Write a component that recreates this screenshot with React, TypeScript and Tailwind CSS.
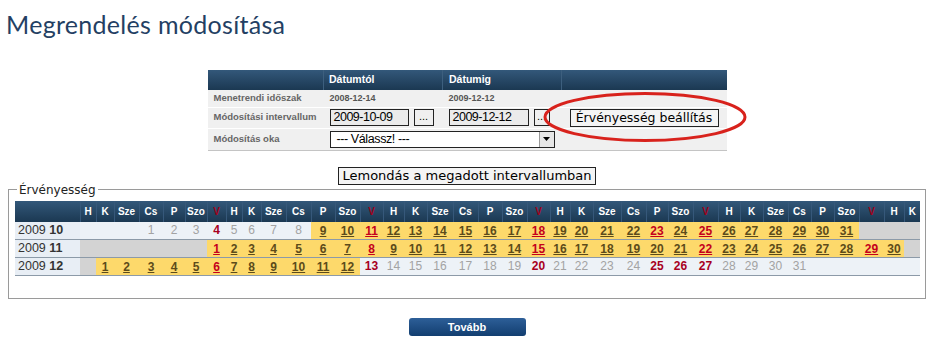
import React from 'react'

const widths = [16, 18, 25, 24, 22, 22, 19, 16, 19, 25, 25, 24, 25, 23, 21, 23, 26, 25, 24, 25, 23, 20, 23, 28, 25, 22, 25, 25, 22, 23, 25, 23, 23, 25, 25, 20, 16]
const dayNames = ['H', 'K', 'Sze', 'Cs', 'P', 'Szo', 'V']

interface MonthRow {
  m: string
  offset: number
  days: number
  from: number
  to: number
  red: number[]
  grayBefore: boolean
  grayAfter: boolean
}

const months: MonthRow[] = [
  { m: '10', offset: 3, days: 31, from: 9, to: 31, red: [4, 11, 18, 23, 25], grayBefore: false, grayAfter: true },
  { m: '11', offset: 6, days: 30, from: 1, to: 30, red: [1, 8, 15, 22, 29], grayBefore: true, grayAfter: true },
  { m: '12', offset: 1, days: 31, from: 1, to: 12, red: [6, 13, 20, 25, 26, 27], grayBefore: true, grayAfter: false },
]

const sans = "font-['Liberation_Sans',Arial,sans-serif]"
const verdana = "font-['DejaVu_Sans',Verdana,sans-serif]"
const cell = 'p-0 h-[17px] leading-[16px] border-b border-[#8c9aa8]'

function MonthCells({ row }: { row: MonthRow }) {
  const cells = []
  for (let i = 0; i < 37; i++) {
    const d = i - row.offset + 1
    if (d < 1 || d > row.days) {
      const gray = d < 1 ? row.grayBefore : row.grayAfter
      cells.push(<td key={i} className={`${cell} ${gray ? 'bg-[#d3d3d3]' : 'bg-[#edf2f7]'}`} />)
      continue
    }
    const isRed = row.red.includes(d)
    if (d >= row.from && d <= row.to) {
      cells.push(
        <td key={i} className={`${cell} bg-[#fdd96b] text-center`}>
          <span className={`underline font-bold text-[12px] ${isRed ? 'text-[#c4001c]' : 'text-[#5c4b1a]'}`}>{d}</span>
        </td>
      )
    } else {
      cells.push(
        <td key={i} className={`${cell} bg-[#edf2f7] text-center text-[12px] ${isRed ? 'font-bold text-[#a8001e]' : 'text-[#a3a3a3]'}`}>
          {d}
        </td>
      )
    }
  }
  return <>{cells}</>
}

export default function App() {
  return (
    <div className="w-[934px] h-[341px] bg-white overflow-hidden flex flex-col">
      <h1 className="pl-[6px] pt-[9px] text-[25px] leading-[30px] text-[#243f63] font-['Lato',sans-serif] tracking-[0.3px]">
        Megrendelés módosítása
      </h1>

      {/* Interval table */}
      <div className="relative mt-[31px] mx-auto w-[519px]">
        <table className={`w-[519px] table-fixed border-collapse ${sans}`}>
          <colgroup>
            <col className="w-[116px]" />
            <col className="w-[119px]" />
            <col className="w-[119px]" />
            <col className="w-[165px]" />
          </colgroup>
          <thead>
            <tr className="h-[20px] bg-linear-to-b from-[#33587a] to-[#1b3852] text-white text-[10.5px] font-bold text-left">
              <th className="p-0" />
              <th className="p-0 pl-[5px] border-l border-[#3d5f7e]">Dátumtól</th>
              <th className="p-0 pl-[6px] border-l border-[#3d5f7e]">Dátumig</th>
              <th className="p-0 border-l border-[#3d5f7e]" />
            </tr>
          </thead>
          <tbody className="bg-[#f0f0f0] text-[#666] font-bold">
            <tr className="h-[17px] border-b border-white">
              <td className="p-0 pl-[6px] text-[9.5px]">Menetrendi időszak</td>
              <td className="p-0 pl-[6px] text-[9px] text-[#555]">2008-12-14</td>
              <td className="p-0 pl-[6px] text-[9px] text-[#555]">2009-12-12</td>
              <td className="p-0" />
            </tr>
            <tr className="h-[21px] border-b border-white">
              <td className="p-0 pl-[6px] text-[9.5px]">Módosítási intervallum</td>
              <td className="p-0 pl-[6px]">
                <div className="flex items-center gap-[5px]">
                  <div className="w-[79px] h-[17px] border border-[#222] bg-[#ebebeb] pl-[3px] text-[12.5px] leading-[15px] tracking-[-0.5px] font-normal text-black">2009-10-09</div>
                  <div className="w-[20px] h-[17px] border border-[#222] bg-[#efefef] text-[11px] leading-[13px] text-black text-center font-normal">...</div>
                </div>
              </td>
              <td className="p-0 pl-[6px]">
                <div className="flex items-center gap-[5px]">
                  <div className="w-[80px] h-[17px] border border-[#222] bg-[#ebebeb] pl-[3px] text-[12.5px] leading-[15px] tracking-[-0.5px] font-normal text-black">2009-12-12</div>
                  <div className="w-[16px] h-[17px] border border-[#222] bg-[#efefef] text-[11px] leading-[13px] text-black text-center font-normal">...</div>
                </div>
              </td>
              <td className="p-0 pl-[8px]">
                <div className={`w-[149px] h-[18px] border border-[#222] bg-[#f4f4f4] text-[12.5px] leading-[16px] text-black font-normal text-center ${verdana}`}>
                  Érvényesség beállítás
                </div>
              </td>
            </tr>
            <tr className="h-[22px] border-b border-[#c4c4c4]">
              <td className="p-0 pl-[6px] text-[9.5px]">Módosítás oka</td>
              <td colSpan={2} className="p-0 pl-[6px]">
                <div className="w-[225px] h-[17px] border border-[#222] bg-white flex items-center justify-between font-normal text-black">
                  <span className="pl-[6px] text-[12.5px] leading-[15px] tracking-[-0.4px]">--- Válassz! ---</span>
                  <span className="w-[15px] h-[15px] bg-[#e6e6e6] border-l border-[#999] flex items-center justify-center">
                    <svg width="7" height="4" viewBox="0 0 7 4"><path d="M0 0h7L3.5 4z" fill="#000" /></svg>
                  </span>
                </div>
              </td>
              <td className="p-0" />
            </tr>
          </tbody>
        </table>
        <svg className="absolute left-[334px] top-[21px] pointer-events-none" width="206" height="52" viewBox="0 0 206 52">
          <ellipse cx="103" cy="26" rx="100" ry="23.5" fill="none" stroke="#d8221c" strokeWidth="3" />
        </svg>
      </div>

      <div className="mt-[16px] flex justify-center">
        <div className={`h-[18px] px-[3px] border border-[#222] bg-[#f4f4f4] text-[13px] leading-[16px] text-black ${verdana}`}>
          Lemondás a megadott intervallumban
        </div>
      </div>

      <fieldset className="mt-[-2px] ml-[8px] w-[918px] border border-[#9a9a9a] pl-[6px] pr-[5px] pt-[4px] pb-[22px]">
        <legend className={`ml-[2px] px-[2px] text-[12px] leading-[14px] text-[#222] ${verdana}`}>Érvényesség</legend>
        <table className={`w-[905px] table-fixed border-collapse ${sans}`}>
          <colgroup>
            <col className="w-[65px]" />
            {widths.map((w, i) => <col key={i} style={{ width: w }} />)}
          </colgroup>
          <thead>
            <tr className="bg-linear-to-b from-[#33587a] to-[#1b3852] text-[10px] font-bold">
              <th className="p-0 h-[21px]" />
              {widths.map((_, i) => {
                const n = dayNames[i % 7]
                return (
                  <th key={i} className={`p-0 h-[21px] border-l border-[#36587a] text-center ${n === 'V' ? 'text-[#a0001a]' : 'text-white'}`}>{n}</th>
                )
              })}
            </tr>
          </thead>
          <tbody>
            {months.map(row => (
              <tr key={row.m}>
                <td className={`${cell} bg-[#e8eef5] pl-[3px] text-[12.5px] text-[#333] whitespace-nowrap`}>
                  2009 <span className="font-bold">{row.m}</span>
                </td>
                <MonthCells row={row} />
              </tr>
            ))}
          </tbody>
        </table>
      </fieldset>

      <div className="mt-[19px] flex justify-center">
        <div className={`w-[117px] h-[18px] rounded-[3px] bg-linear-to-b from-[#2d5f98] to-[#123e70] text-white text-[11px] leading-[18px] font-bold text-center ${sans}`}>
          Tovább
        </div>
      </div>
    </div>
  )
}
